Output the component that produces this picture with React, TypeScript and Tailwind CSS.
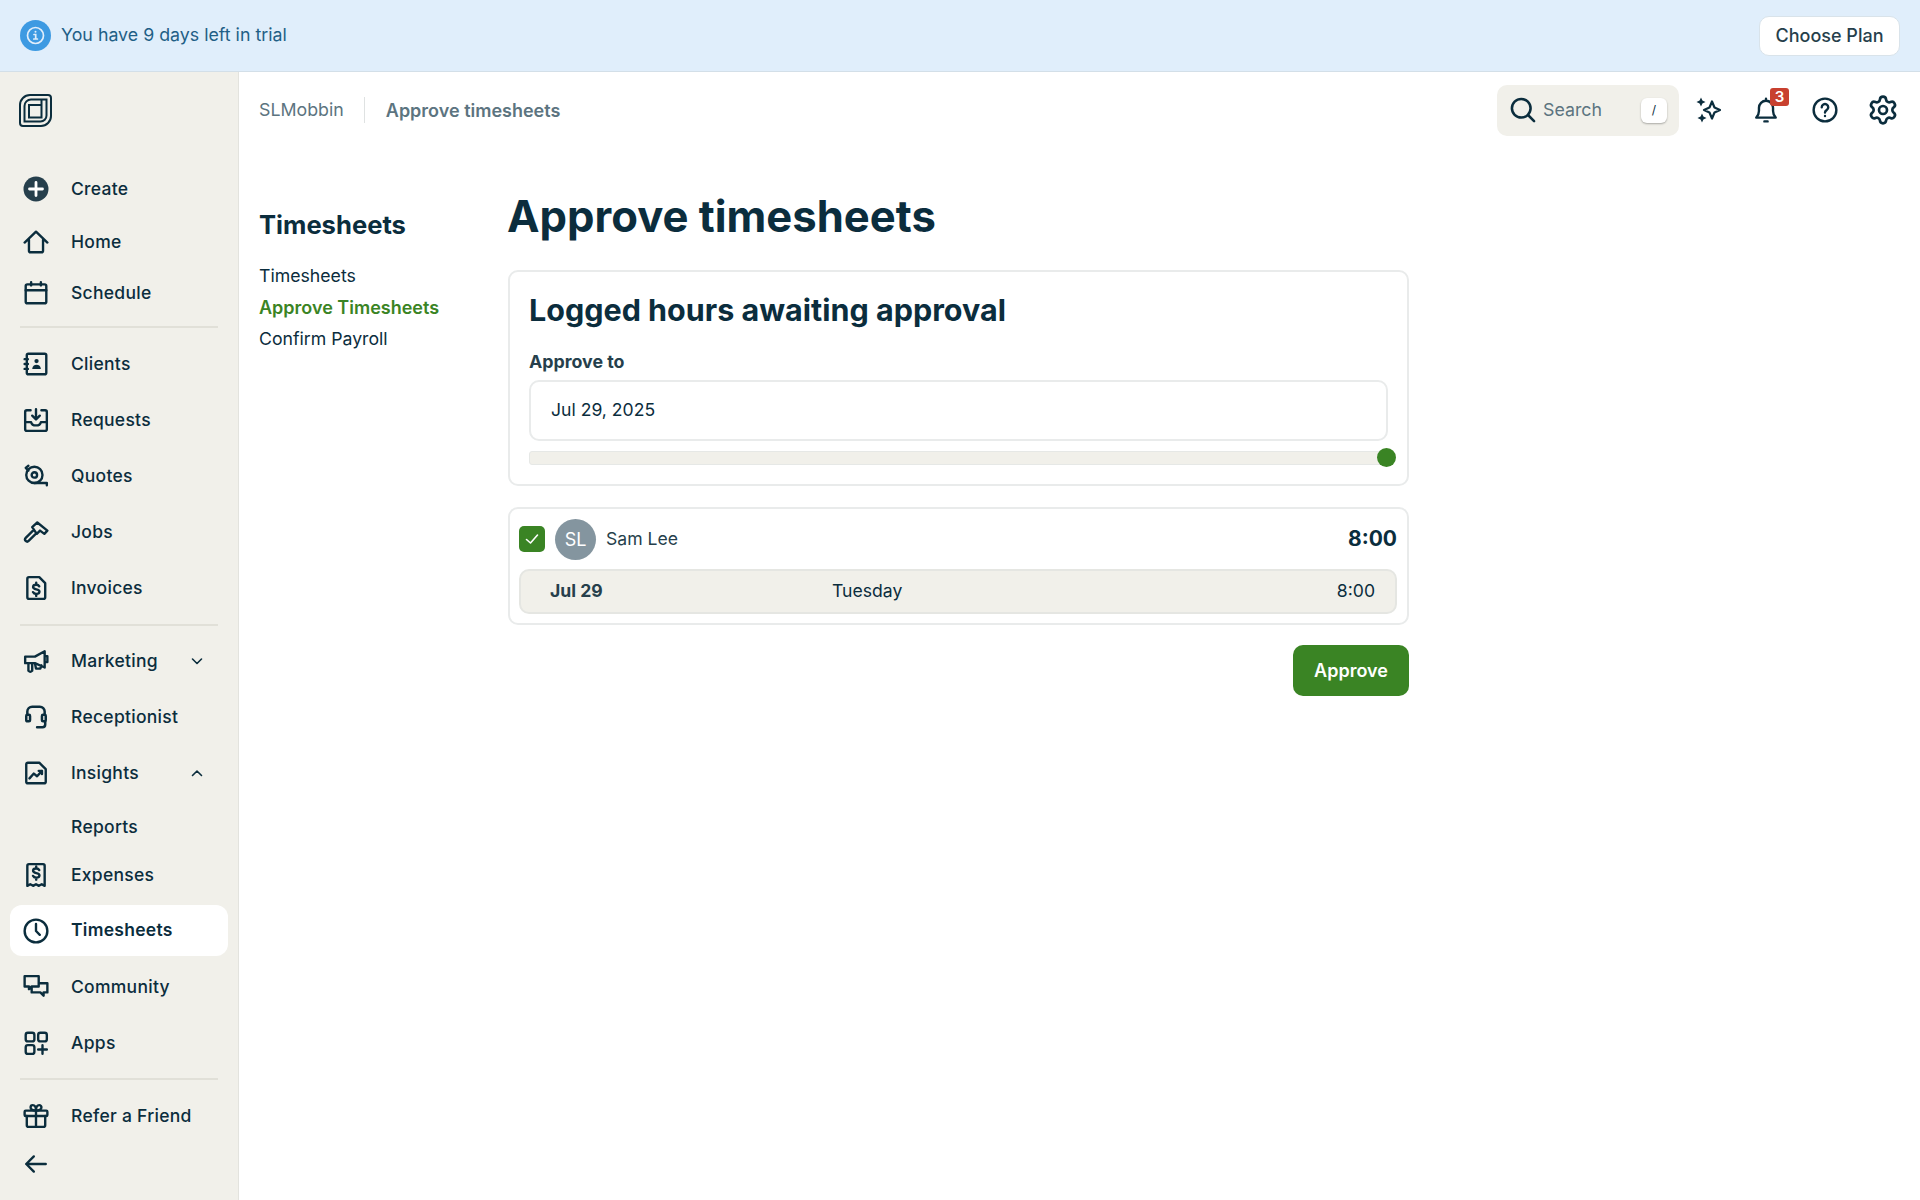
import { ReactNode } from "react";
import { Settings } from "lucide-react";

const ink = "#0b2d3d";

function Ico({ children, size = 26, sw = 2.2 }: { children: ReactNode; size?: number; sw?: number }) {
  return (
    <svg width={size} height={size} viewBox="0 0 24 24" fill="none" stroke={ink} strokeWidth={sw} strokeLinecap="round" strokeLinejoin="round">
      {children}
    </svg>
  );
}

const dollar = (y: number) => (
  <g transform={`translate(0 ${y})`}>
    <path d="M15 7.500c-.5-1-1.500-1.500-2.800-1.500-1.700 0-2.900.8-2.900 2.100 0 2.900 5.900 1.300 5.900 4.200 0 1.300-1.300 2.200-3 2.200-1.400 0-2.500-.6-3-1.700M12.200 4.200v1.800M12.200 14.500v1.800" />
  </g>
);

const icons: Record<string, ReactNode> = {
  create: (
    <svg width="26" height="26" viewBox="0 0 26 26">
      <circle cx="13" cy="13" r="12.5" fill="#263f4c" />
      <path d="M13 6.500v13M6.500 13h13" stroke="#fff" strokeWidth="2.800" strokeLinecap="round" />
    </svg>
  ),
  home: <Ico><path d="M1.500 12.500 12 2.500l10.500 10M5.500 10v10a1.500 1.500 0 0 0 1.500 1.500h10a1.500 1.500 0 0 0 1.500-1.500V10" /></Ico>,
  schedule: <Ico><rect x="2.500" y="4" width="19" height="17.500" rx="1.500" /><path d="M2.500 9.500h19M7.500 2v3M16.500 2v3" /></Ico>,
  clients: (
    <Ico>
      <rect x="3.500" y="2.500" width="18" height="19" rx="1.500" />
      <path d="M1.500 7.500h3M1.500 12h3M1.500 16.500h3" />
      <circle cx="12.500" cy="9.300" r="2" fill={ink} stroke="none" />
      <path d="M8.500 16.500c.3-2.500 1.800-3.800 4-3.800s3.700 1.300 4 3.800z" fill={ink} stroke="none" />
    </Ico>
  ),
  requests: <Ico><path d="M7 3H3.500a1.500 1.500 0 0 0-1.500 1.500v16A1.500 1.500 0 0 0 3.500 22h17a1.500 1.500 0 0 0 1.500-1.500v-16A1.500 1.500 0 0 0 20.500 3H17M2 14h5.500c.5 2.200 2.200 3 4.500 3s4-.8 4.500-3H22M12 2v9M8.500 8l3.500 3.500L15.500 8" /></Ico>,
  quotes: <Ico><circle cx="10.500" cy="11" r="7.500" /><circle cx="10.500" cy="11" r="2.500" /><path d="M5 2.500l-2.500 2 2.500 2.500M10.500 18.500h11.500v2" /></Ico>,
  jobs: <Ico><path d="M8.500 7.500 13.200 3.200l9.300 7.500-2.800 3-4-3-3 3zM9 11 2.500 17.500a1.700 1.700 0 0 0 2.700 2.700L12 13.500" /></Ico>,
  invoices: <Ico><path d="M5.500 2h9.500l5.500 5.500v13a1.500 1.500 0 0 1-1.500 1.500H5.500A1.500 1.500 0 0 1 4 20.500v-17A1.500 1.500 0 0 1 5.500 2z" />{dollar(3)}</Ico>,
  marketing: <Ico><path d="M2 8h9l9-5v15l-9-4H2zM20 7.500h2.500v5.500H20M5 14v7a2.500 2.500 0 0 0 3.500 0v-7M11 14l1 5h4l1-3" /></Ico>,
  receptionist: <Ico sw={2.300}><path d="M4 9V7A4.500 4.500 0 0 1 8.500 2.500h7A4.500 4.500 0 0 1 20 7v2M20.500 16.500v2.500a2.500 2.500 0 0 1-2.500 2.500h-5" /><rect x="3" y="10" width="3.500" height="6" rx="1" /><rect x="17.500" y="10" width="3.500" height="6" rx="1" /></Ico>,
  insights: <Ico><path d="M5 2.500h10l6 6v11.500a1.500 1.500 0 0 1-1.500 1.500H4.500A1.500 1.500 0 0 1 3 20V4A1.500 1.500 0 0 1 4.500 2.500zM6 17l4-4.500 3 2.500 4.500-5M14.500 10h3v3" /></Ico>,
  expenses: <Ico><path d="M4 22V3.500A1.500 1.500 0 0 1 5.500 2h13A1.500 1.500 0 0 1 20 3.500V22l-2.700-1.500-2.600 1.500-2.700-1.500-2.700 1.500-2.600-1.500z" />{dollar(0)}</Ico>,
  timesheets: <Ico><circle cx="12" cy="12" r="10.500" /><path d="M12 5.500V12l3.500 3.500" /></Ico>,
  community: <Ico><path d="M1.500 2h13v9.500H8l-2.500 2.500v-2.500h-4zM8 11.500V17h8l3 3v-3h3.500V8.500H15" /></Ico>,
  apps: <Ico><rect x="2.500" y="2.500" width="8" height="8" rx="2" /><rect x="14" y="2.500" width="8" height="8" rx="2" /><rect x="2.500" y="14" width="8" height="8" rx="2" /><path d="M18 14v8M14 18h8" /></Ico>,
  gift: <Ico><rect x="1.500" y="7" width="21" height="5" rx="1" /><path d="M3.500 12v8.500a1.500 1.500 0 0 0 1.500 1.500h14a1.500 1.500 0 0 0 1.500-1.500V12M12 7v15M12 7C9 7 7 5.800 7 4a2 2 0 0 1 2-2c2 0 3 2.500 3 5zM12 7c3 0 5-1.200 5-3a2 2 0 0 0-2-2c-2 0-3 2.500-3 5z" /></Ico>,
  back: <Ico><path d="M21 12H3M10 5l-7 7 7 7" /></Ico>,
};

type Item = { key: string; label?: string; h: string; chevron?: "up" | "down"; active?: boolean };

function NavRow({ item }: { item: Item }) {
  return (
    <div className={`flex items-center mx-[10px] pl-[13px] ${item.h} ${item.active ? "bg-white rounded-[12px]" : ""}`}>
      <span className="w-[26px] h-[26px] flex items-center justify-center">{icons[item.key]}</span>
      <span className={`ml-[22px] text-[17.5px] tracking-[0.28px] text-[#0b2d3d] ${item.active ? "font-semibold" : "font-medium"}`}>{item.label}</span>
      {item.chevron && (
        <svg className="ml-auto mr-[24px]" width="14" height="14" viewBox="0 0 14 14" fill="none" stroke={ink} strokeWidth="1.6" strokeLinecap="round" strokeLinejoin="round">
          {item.chevron === "down" ? <path d="M2.500 5l4.500 4.500L11.500 5" /> : <path d="M2.500 9.500 7 5l4.500 4.500" />}
        </svg>
      )}
    </div>
  );
}

function Divider({ cls }: { cls: string }) {
  return <div className={`h-[2px] mx-[20px] bg-[#e1e0d8] ${cls}`} />;
}

function Sidebar() {
  return (
    <aside className="w-[239px] shrink-0 bg-[#f1f0ea] border-r border-[#e3e3de] flex flex-col">
      <div className="h-[91px] pl-[18px] pt-[21px]">
        <svg width="35" height="35" viewBox="0 0 35 35" fill="none" stroke={ink} strokeWidth="2">
          <path d="M12 2h18a3 3 0 0 1 3 3v18a10 10 0 0 1-10 10H5a3 3 0 0 1-3-3V12A10 10 0 0 1 12 2z" />
          <path d="M13 6.500h15.500v16a6 6 0 0 1-6 6H6.500V13A6.500 6.500 0 0 1 13 6.500z" />
          <path d="M23.500 7v17.500H11V12h12" />
        </svg>
      </div>
      <NavRow item={{ key: "create", label: "Create", h: "h-[52px]" }} />
      <div className="h-px" />
      <NavRow item={{ key: "home", label: "Home", h: "h-[52px]" }} />
      <NavRow item={{ key: "schedule", label: "Schedule", h: "h-[50px]" }} />
      <Divider cls="mt-[8px] mb-[8px]" />
      <NavRow item={{ key: "clients", label: "Clients", h: "h-[56px]" }} />
      <NavRow item={{ key: "requests", label: "Requests", h: "h-[56px]" }} />
      <NavRow item={{ key: "quotes", label: "Quotes", h: "h-[56px]" }} />
      <NavRow item={{ key: "jobs", label: "Jobs", h: "h-[56px]" }} />
      <NavRow item={{ key: "invoices", label: "Invoices", h: "h-[56px]" }} />
      <Divider cls="mt-[8px] mb-[7px]" />
      <NavRow item={{ key: "marketing", label: "Marketing", h: "h-[56px]", chevron: "down" }} />
      <NavRow item={{ key: "receptionist", label: "Receptionist", h: "h-[56px]" }} />
      <NavRow item={{ key: "insights", label: "Insights", h: "h-[56px]", chevron: "up" }} />
      <div className="h-[52px] pl-[71px] flex items-center text-[17.5px] font-medium tracking-[0.28px] text-[#0b2d3d]">Reports</div>
      <NavRow item={{ key: "expenses", label: "Expenses", h: "h-[44px]" }} />
      <div className="h-[8px]" />
      <NavRow item={{ key: "timesheets", label: "Timesheets", h: "h-[51px]", active: true }} />
      <div className="h-[3px]" />
      <NavRow item={{ key: "community", label: "Community", h: "h-[56px]" }} />
      <NavRow item={{ key: "apps", label: "Apps", h: "h-[56px]" }} />
      <Divider cls="mt-[7px] mb-[8px]" />
      <NavRow item={{ key: "gift", label: "Refer a Friend", h: "h-[56px]" }} />
      <NavRow item={{ key: "back", h: "h-[40px]" }} />
    </aside>
  );
}

function TopBar() {
  return (
    <div className="h-[76px] flex items-center pl-[20px] pr-[24px]">
      <span className="text-[17.8px] text-[#5c7480]">SLMobbin</span>
      <span className="w-px h-[26px] bg-[#dfe2e2] ml-[20px] mr-[21px]" />
      <span className="text-[18px] font-semibold text-[#5c7480]">Approve timesheets</span>
      <div className="ml-auto flex items-center">
        <div className="w-[182px] h-[51px] bg-[#f1f0ea] rounded-[10px] flex items-center pl-[12px] pr-[12px]">
          <Ico size={28}><circle cx="10.500" cy="10.500" r="8" /><path d="m16.500 16.500 5 5" /></Ico>
          <span className="ml-[6px] text-[17.8px] text-[#5c7480]">Search</span>
          <span className="ml-auto w-[26px] h-[25px] bg-white rounded-[6px] shadow-[0_1px_2px_rgba(0,0,0,0.3)] flex items-center justify-center text-[12px] text-[#0b2d3d]">/</span>
        </div>
        <span className="ml-[16px] w-[26px] flex justify-center">
          <svg width="26" height="26" viewBox="0 0 26 26" fill="none" stroke={ink} strokeWidth="2.200" strokeLinejoin="round">
            <path d="M17 4.500 19.500 10.500 25 13l-5.500 2.500L17 21.500l-2.500-6L9 13l5.500-2.500z" />
            <path d="M6 .5 7.400 3.600 10.500 5 7.400 6.400 6 9.500 4.600 6.400 1.500 5l3.100-1.400zM7 16.500l1.400 3.100 3.100 1.400-3.100 1.400L7 25.500l-1.400-3.100L2.500 21l3.100-1.400z" fill={ink} stroke="none" />
          </svg>
        </span>
        <span className="ml-[32px] w-[26px] flex justify-center relative">
          <Ico><path d="M3 19h18c-1.500-1.500-2.500-3-2.500-6V10A6.500 6.500 0 0 0 5.500 10v3c0 3-1 4.500-2.500 6zM12 1.500v2M10.500 22.500h3" /></Ico>
          <span className="absolute left-[17px] -top-[9px] w-[19px] h-[18px] bg-[#c8402f] rounded-[3px] text-white text-[15px] font-semibold leading-[18px] text-center">3</span>
        </span>
        <span className="ml-[33px] w-[26px] flex justify-center">
          <Ico><circle cx="12" cy="12" r="10.500" /><path d="M9 9.500a3 3 0 1 1 4.500 2.600c-1 .6-1.500 1.200-1.500 2.200" /><circle cx="12" cy="17.500" r="1.100" fill={ink} stroke="none" /></Ico>
        </span>
        <span className="ml-[32px] w-[26px] h-[26px] flex items-center justify-center">
          <Settings className="shrink-0" size={32} strokeWidth={2} color={ink} />
        </span>
      </div>
    </div>
  );
}

function Content() {
  return (
    <div className="flex pl-[20px] pt-[33px]">
      <nav className="w-[249px] shrink-0">
        <h2 className="text-[25.600px] font-bold text-[#0b2d3d] leading-[32px] mt-[28px]">Timesheets</h2>
        <div className="mt-[19px] flex flex-col text-[17.7px] text-[#0b2d3d] leading-[31.500px]">
          <span>Timesheets</span>
          <span className="font-semibold text-[18px] text-[#3a8424]">Approve Timesheets</span>
          <span>Confirm Payroll</span>
        </div>
      </nav>
      <main className="w-[901px]">
        <h1 className="text-[43.600px] font-bold text-[#0b2d3d] leading-[52px] mt-[10px] -ml-[1px]">Approve timesheets</h1>
        <section className="mt-[27px] h-[216px] border-2 border-[#e9ebeb] rounded-[10px] pl-[19px] pr-[20px] pt-[18px]">
          <h3 className="text-[30.500px] font-bold text-[#0b2d3d] leading-[40px]">Logged hours awaiting approval</h3>
          <div className="mt-[20px] text-[17.800px] font-bold text-[#263f4c] leading-[24px]">Approve to</div>
          <div className="mt-[6px] h-[61px] w-[859px] border-2 border-[#e9ebeb] rounded-[10px] flex items-center pl-[20px] text-[17.600px] text-[#0b2d3d]">Jul 29, 2025</div>
          <div className="mt-[10px] h-[14px] w-[859px] bg-[#f1f0ea] border border-[#e6e8e6] rounded-[3px] relative">
            <span className="absolute -right-[9px] -top-[4px] w-[19px] h-[19px] rounded-full bg-[#3a8424]" />
          </div>
        </section>
        <section className="mt-[21px] h-[118px] border-2 border-[#e9ebeb] rounded-[10px] pl-[9px] pr-[10px]">
          <div className="h-[60px] flex items-center">
            <span className="w-[26px] h-[26px] rounded-[5px] bg-[#3a8424] flex items-center justify-center">
              <svg width="16" height="16" viewBox="0 0 16 16" fill="none" stroke="#fff" strokeWidth="1.600" strokeLinecap="round" strokeLinejoin="round"><path d="M2.500 8.500 6.500 12l7-8" /></svg>
            </span>
            <span className="ml-[10px] w-[41px] h-[41px] rounded-full bg-[#84959f] text-white text-[18px] flex items-center justify-center">SL</span>
            <span className="ml-[10px] text-[17.600px] text-[#263f4c]">Sam Lee</span>
            <span className="ml-auto text-[21px] font-bold text-[#0b2d3d]">8:00</span>
          </div>
          <div className="h-[45px] bg-[#f1f0ea] border-2 border-[#e5e6e2] rounded-[10px] flex items-center pl-[29px] pr-[20px] text-[17.600px]">
            <span className="w-[282px] font-bold text-[#263f4c]">Jul 29</span>
            <span className="text-[#0b2d3d]">Tuesday</span>
            <span className="ml-auto text-[#0b2d3d]">8:00</span>
          </div>
        </section>
        <div className="mt-[20px] flex justify-end">
          <button className="w-[116px] h-[51px] rounded-[10px] bg-[#3a8424] text-white text-[18px] font-semibold">Approve</button>
        </div>
      </main>
    </div>
  );
}

export default function App() {
  return (
    <div className="w-[1920px] h-[1200px] flex flex-col overflow-hidden bg-white font-['Inter',sans-serif]">
      <div className="h-[72px] shrink-0 bg-[#e0eefb] border-b border-[#d3dfe8] flex items-center pl-[20px] pr-[20px]">
        <span className="w-[31px] h-[31px] rounded-full bg-[#3d9ae2] flex items-center justify-center">
          <svg width="19" height="19" viewBox="0 0 19 19" fill="none" stroke="#e0eefb" strokeWidth="1.700"><circle cx="9.500" cy="9.500" r="8" /><path d="M8 8.500h1.700v4.500M7.800 13h3.600" strokeLinecap="round" /><circle cx="9.500" cy="5.800" r="1" fill="#e0eefb" stroke="none" /></svg>
        </span>
        <span className="ml-[10px] text-[17.800px] text-[#1f5f86]">You have 9 days left in trial</span>
        <button className="ml-auto w-[141px] h-[40px] bg-white border border-[#d9e3ea] rounded-[10px] text-[18px] font-medium text-[#263f4c]">Choose Plan</button>
      </div>
      <div className="flex flex-1 min-h-0">
        <Sidebar />
        <div className="flex-1">
          <TopBar />
          <Content />
        </div>
      </div>
    </div>
  );
}
